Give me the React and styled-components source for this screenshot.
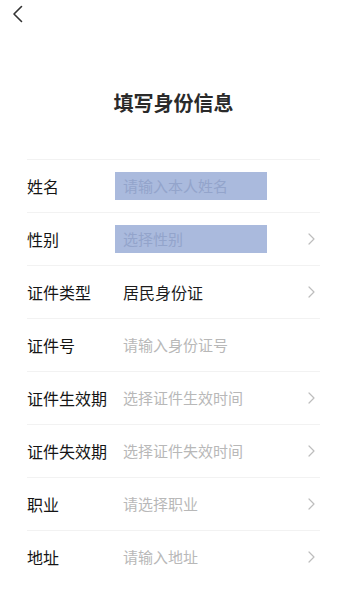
import React from "react";
import styled, { createGlobalStyle } from "styled-components";

const GlobalStyle = createGlobalStyle`
  html, body {
    margin: 0;
    padding: 0;
    background: #fff;
  }
  body {
    font-family: "Noto Sans CJK SC", "Noto Sans", sans-serif;
    color: #222;
  }
`;

const Page = styled.div`
  width: 362px;
  min-height: 600px;
  background: #fff;
`;

const TopBar = styled.div`
  height: 30px;
  display: flex;
  align-items: flex-start;
  padding-left: 12px;
  padding-top: 5px;
  box-sizing: border-box;
`;

const BackButton = styled.button`
  border: none;
  background: none;
  padding: 0;
  width: 12px;
  height: 18px;
  display: flex;
  cursor: pointer;
`;

const Title = styled.h1`
  margin: 59px 42px 42px 27px;
  height: 28px;
  line-height: 28px;
  font-size: 20px;
  font-weight: 600;
  text-align: center;
  color: #2a2a2a;
`;

const List = styled.div`
  margin: 0 42px 0 27px;
  display: flex;
  flex-direction: column;
`;

const Row = styled.div`
  height: 53px;
  box-sizing: border-box;
  border-top: 1px solid #f2f2f2;
  display: flex;
  align-items: center;
`;

const Label = styled.div`
  width: 88px;
  flex-shrink: 0;
  font-size: 16px;
  color: #151515;
  white-space: nowrap;
`;

const Value = styled.div`
  flex: 1;
  display: flex;
  align-items: center;
`;

const ValueText = styled.span`
  height: 28px;
  line-height: 28px;
  padding-left: 8px;
  width: ${(p) => (p.$highlight ? "144px" : "auto")};
  background: ${(p) => (p.$highlight ? "#aabadd" : "transparent")};
  font-size: ${(p) => (p.$filled ? "16px" : "15px")};
  color: ${(p) =>
    p.$filled ? "#1c1c1c" : p.$highlight ? "#93a4cb" : "#b8b8b8"};
  white-space: nowrap;
`;

const Chevron = styled.svg`
  width: 7px;
  height: 12px;
  margin-right: 5px;
  flex-shrink: 0;
`;

const fields = [
  { label: "姓名", value: "请输入本人姓名", highlight: true },
  { label: "性别", value: "选择性别", highlight: true, arrow: true },
  { label: "证件类型", value: "居民身份证", filled: true, arrow: true },
  { label: "证件号", value: "请输入身份证号" },
  { label: "证件生效期", value: "选择证件生效时间", arrow: true },
  { label: "证件失效期", value: "选择证件失效时间", arrow: true },
  { label: "职业", value: "请选择职业", arrow: true },
  { label: "地址", value: "请输入地址", arrow: true },
];

const ArrowRight = () => (
  <Chevron viewBox="0 0 7 12" fill="none">
    <path
      d="M1 1l5 5-5 5"
      stroke="#bdbdbd"
      strokeWidth="1.2"
      strokeLinecap="round"
      strokeLinejoin="round"
    />
  </Chevron>
);

const App = () => {
  return (
    <Page>
      <GlobalStyle />
      <TopBar>
        <BackButton aria-label="back">
          <svg width="12" height="18" viewBox="0 0 12 18" fill="none">
            <path
              d="M9.5 1.5L2 9l7.5 7.5"
              stroke="#333"
              strokeWidth="1.6"
              strokeLinecap="round"
              strokeLinejoin="round"
            />
          </svg>
        </BackButton>
      </TopBar>
      <Title>填写身份信息</Title>
      <List>
        {fields.map((f) => (
          <Row key={f.label}>
            <Label>{f.label}</Label>
            <Value>
              <ValueText $highlight={f.highlight} $filled={f.filled}>
                {f.value}
              </ValueText>
            </Value>
            {f.arrow && <ArrowRight />}
          </Row>
        ))}
      </List>
    </Page>
  );
};

export default App;
